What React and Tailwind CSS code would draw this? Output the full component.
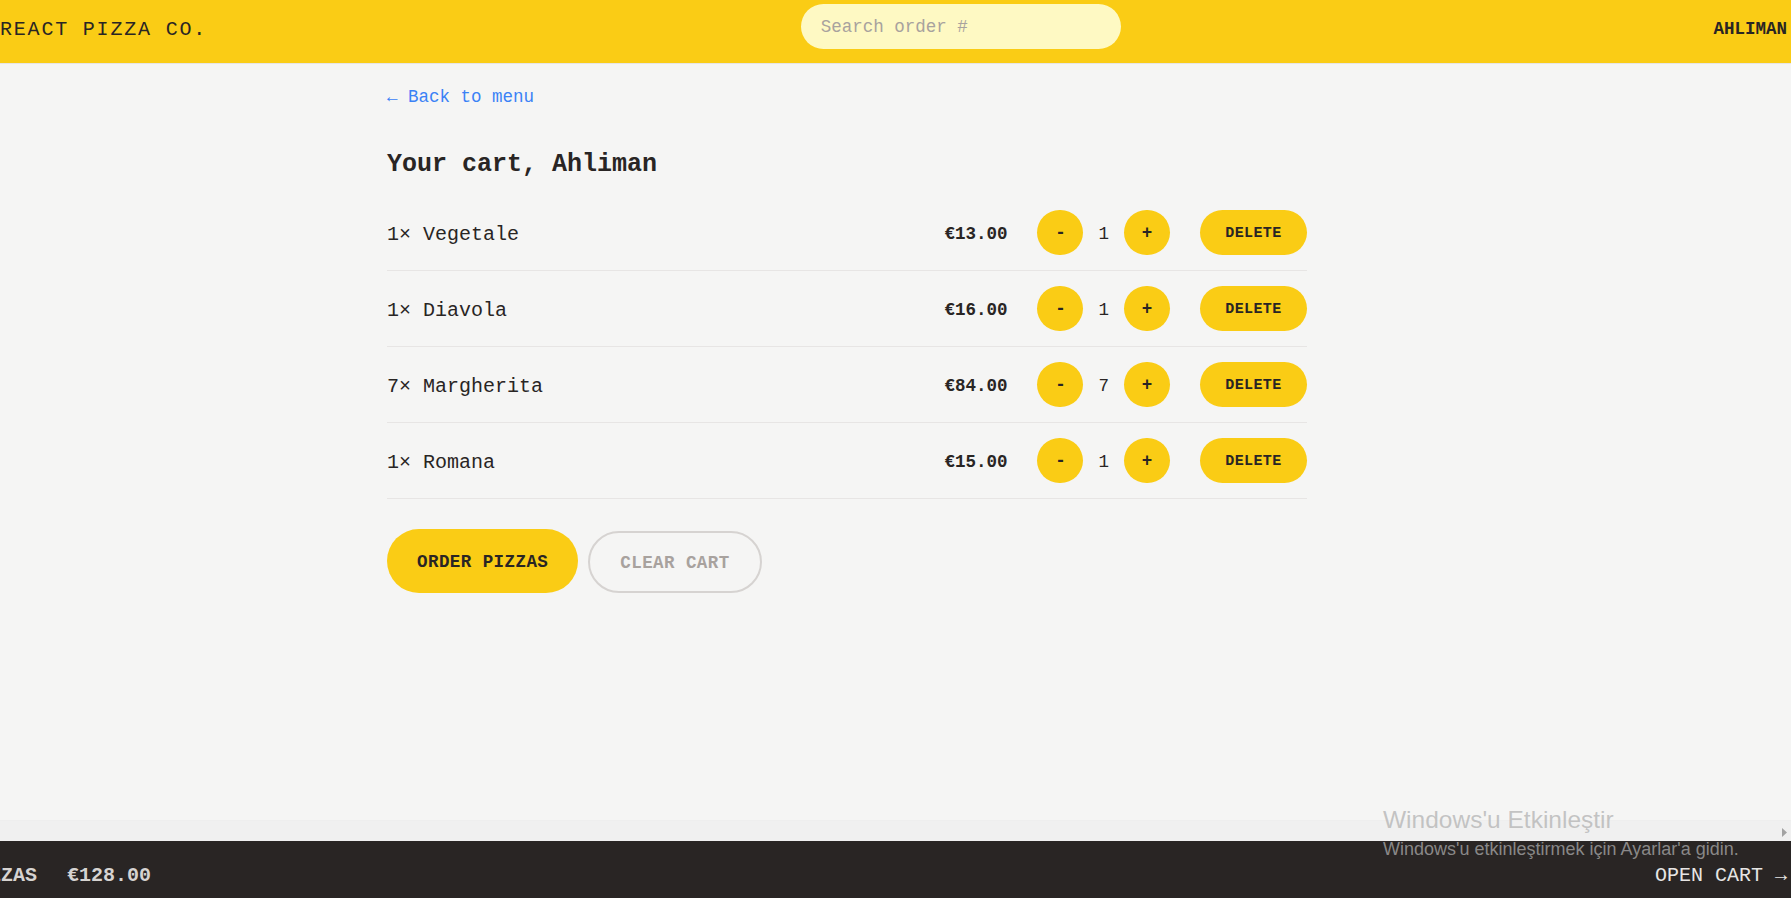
import React from "react";

const items = [
  { q: 1, name: "Vegetale", price: "€13.00" },
  { q: 1, name: "Diavola", price: "€16.00" },
  { q: 7, name: "Margherita", price: "€84.00" },
  { q: 1, name: "Romana", price: "€15.00" },
];

function RoundButton({ children }) {
  return (
    <button className="inline-flex h-[45px] w-[46px] items-center justify-center rounded-full bg-[#facc15] pt-[2px] text-[17.5px] font-semibold leading-[25px] text-[#292524]">
      {children}
    </button>
  );
}

function Row({ item }) {
  return (
    <li className="flex items-center justify-between border-b border-[#e7e5e4] py-[15px]">
      <p className="pt-[5px] text-[20px] leading-[30px] text-[#292524]">
        {item.q}× {item.name}
      </p>
      <div className="flex items-center gap-[30px]">
        <p className="pt-[3px] text-[17.5px] font-bold leading-[25px] text-[#292524]">
          {item.price}
        </p>
        <div className="flex items-center gap-[15px]">
          <RoundButton>-</RoundButton>
          <span className="pt-[3px] text-[17.5px] font-medium leading-[25px] text-[#292524]">
            {item.q}
          </span>
          <RoundButton>+</RoundButton>
        </div>
        <button className="inline-flex h-[45px] w-[107px] items-center justify-center rounded-full bg-[#facc15] pt-[2px] text-[15px] font-semibold uppercase leading-[20px] tracking-wide text-[#292524]">
          Delete
        </button>
      </div>
    </li>
  );
}

export default function App() {
  return (
    <div className="relative flex h-[898px] w-full flex-col overflow-hidden bg-[#f5f5f4] font-['Liberation_Mono',monospace] text-[#292524]">
      {/* Header */}
      <header className="flex h-[64px] shrink-0 items-start justify-between overflow-hidden border-b border-[#e7e5e4] bg-[#facc15] pr-[4px] pt-[4px] uppercase">
        <a className="-ml-[69px] mt-[6px] whitespace-nowrap text-[20px] leading-[40px] tracking-[1.8px] text-[#292524]">
          Fast React Pizza Co.
        </a>
        <form className="ml-[1px]">
          <input
            placeholder="Search order #"
            className="h-[45px] w-[320px] rounded-full bg-[#fef9c3] px-[20px] text-[17.5px] text-[#292524] placeholder:text-[#a8a29e] focus:outline-none"
          />
        </form>
        <div className="mt-[5px] text-[17.5px] font-semibold leading-[40px] text-[#292524]">
          Ahliman
        </div>
      </header>

      {/* Main */}
      <main className="h-[756px] shrink-0 overflow-hidden">
        <div className="ml-[367px] w-[960px] px-[20px] pt-[16px]">
          <div className="h-[30px] pt-[2px] text-[20px] leading-[30px]">
            <a className="text-[17.5px] text-[#3b82f6]">← Back to menu</a>
          </div>
          <h2 className="mt-[35px] h-[35px] pt-[2px] text-[25px] font-semibold leading-[35px] text-[#292524]">
            Your cart, Ahliman
          </h2>
          <ul className="mt-[15px]">
            {items.map((it) => (
              <Row key={it.name} item={it} />
            ))}
          </ul>
          <div className="mt-[30px] flex items-end gap-[10px]">
            <button className="inline-flex h-[64px] items-center justify-center rounded-full bg-[#facc15] px-[30px] pt-[2px] text-[17.5px] font-semibold uppercase leading-[25px] tracking-wide text-[#292524]">
              Order pizzas
            </button>
            <button className="inline-flex h-[62px] items-center justify-center rounded-full border-2 border-[#d6d3d1] px-[30px] pt-[2px] text-[17.5px] font-semibold uppercase leading-[25px] tracking-wide text-[#a8a29e]">
              Clear cart
            </button>
          </div>
        </div>
      </main>

      {/* Horizontal scrollbar strip */}
      <div className="flex h-[21px] shrink-0 items-center justify-end border-t border-[#eeeeee] bg-[#f0f0f0] pr-[1px]">
        <svg width="8" height="9" viewBox="0 0 8 9" className="mr-[1px] mt-[2px]">
          <path d="M1 0 L6 4.5 L1 9 Z" fill="#a3a3a3" />
        </svg>
      </div>

      {/* Cart overview */}
      <div className="flex h-[70px] shrink-0 items-center justify-between bg-[#292524] pr-[4px] text-[20px] uppercase leading-[30px] text-[#e7e5e4]">
        <p className="-ml-[71px] flex gap-[30px] whitespace-nowrap font-semibold text-[#d6d3d1]">
          <span>10 pizzas</span>
          <span>€128.00</span>
        </p>
        <a className="whitespace-nowrap">Open cart →</a>
      </div>

      {/* Windows activation watermark */}
      <div className="pointer-events-none absolute left-[1383px] top-[806px] font-['Liberation_Sans',sans-serif] text-[rgba(176,176,176,0.73)]">
        <div className="whitespace-nowrap text-[24.5px] leading-[28px]">Windows'u Etkinleştir</div>
        <div className="mt-[3px] whitespace-nowrap text-[18px] leading-[24px]">
          Windows'u etkinleştirmek için Ayarlar'a gidin.
        </div>
      </div>
    </div>
  );
}
